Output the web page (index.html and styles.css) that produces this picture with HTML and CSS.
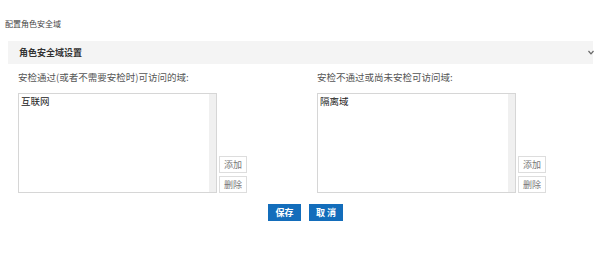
FILE: index.html
```html
<html>
    <head>
        <meta charset="utf-8">
        <link rel="stylesheet" href="styles.css">
    </head>
    <body>
        <div class="title">配置角色安全域</div>
        <div class="panel">
            <div class="panel-head">
                角色安全域设置
                <svg class="chevron" width="6" height="5" viewBox="0 0 6 5"><path d="M0.5 1 L3 3.8 L5.5 1" fill="none" stroke="#666" stroke-width="1.2"/></svg>
            </div>
            <div class="panel-body">
                <div class="col">
                    <div class="label">安检通过(或者不需要安检时)可访问的域:</div>
                    <div class="field">
                        <div class="box">
                            <div class="box-text">互联网</div>
                            <div class="track"></div>
                        </div>
                        <div class="btns">
                            <input type="button" class="small" value="添加">
                            <input type="button" class="small" value="删除">
                        </div>
                    </div>
                </div>
                <div class="col">
                    <div class="label">安检不通过或尚未安检可访问域:</div>
                    <div class="field">
                        <div class="box">
                            <div class="box-text">隔离域</div>
                            <div class="track"></div>
                        </div>
                        <div class="btns">
                            <input type="button" class="small" value="添加">
                            <input type="button" class="small" value="删除">
                        </div>
                    </div>
                </div>
            </div>
            <div class="footer">
                <input type="button" class="blue save" value="保存">
                <input type="button" class="blue" value="取 消">
            </div>
        </div>
    </body>
</html>
```
FILE: styles.css
```css
body
{
    margin: 0;
    font-family: "Noto Sans CJK SC", "Noto Sans", sans-serif;
    color: #333;
    background: #fff;
}
.title
{
    padding: 19px 0 0 5px;
    font-size: 8px;
    line-height: 10px;
    color: #444;
}
.panel
{
    margin: 12px 2px 0 8px;
}
.panel-head
{
    position: relative;
    height: 23px;
    line-height: 23px;
    padding-left: 11px;
    background: #f4f4f4;
    font-size: 9px;
    font-weight: bold;
    color: #333;
}
.chevron
{
    position: absolute;
    right: -1px;
    top: 9px;
}
.panel-body
{
    display: grid;
    grid-template-columns: 299px 1fr;
    padding: 7px 0 0 10px;
}
.label
{
    font-size: 9.5px;
    line-height: 12px;
    color: #555;
}
.field
{
    display: flex;
    align-items: flex-end;
    margin-top: 10px;
}
.box
{
    display: flex;
    width: 199px;
    height: 100px;
    box-sizing: border-box;
    border: 1px solid #d6d6d6;
    background: #fff;
}
.box-text
{
    flex: 1;
    padding: 1px 2px;
    font-size: 9.5px;
    line-height: 12px;
    color: #222;
}
.track
{
    width: 7px;
    background: #f0f0f0;
}
.btns
{
    display: flex;
    flex-direction: column;
    gap: 3px;
    margin-left: 2px;
}
.small
{
    width: 28px;
    height: 17px;
    padding: 0;
    border: 1px solid #ddd;
    background: #fff;
    font-family: inherit;
    font-size: 9px;
    color: #777;
}
.footer
{
    display: flex;
    justify-content: center;
    gap: 8px;
    margin-top: 11px;
    padding-left: 10px;
}
.blue
{
    height: 17px;
    padding: 0 7px;
    border: none;
    background: #136dbb;
    color: #fff;
    font-family: inherit;
    font-size: 9px;
    font-weight: bold;
}
.save
{
    width: 33px;
}
```
